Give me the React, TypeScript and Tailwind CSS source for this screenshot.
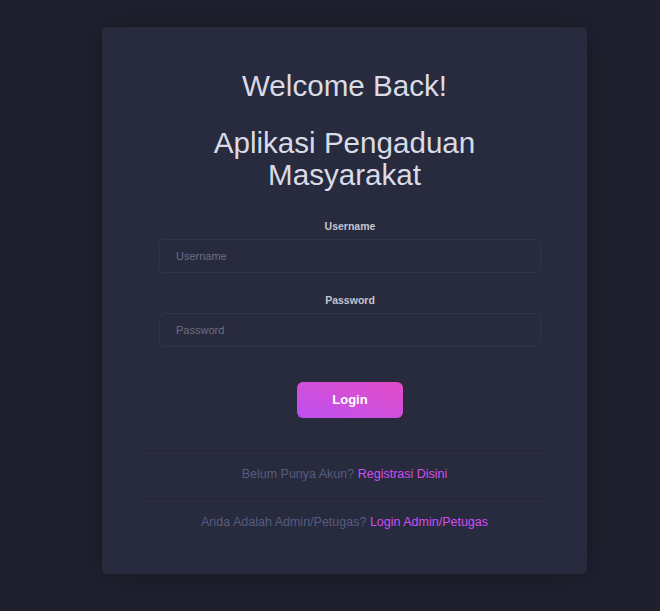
import React from "react";

export default function App() {
  return (
    <div
      className="min-h-[611px] w-full bg-[#1f1f2e] pt-[27px]"
      style={{ fontFamily: '"Liberation Sans", Arial, sans-serif' }}
    >
      <div className="ml-[102px] w-[485px] rounded-[5px] bg-[#282a3e] px-[43px] pt-[41px] pb-[44px] shadow-[0_0_30px_rgba(0,0,0,0.25)]">
        <h1 className="text-center text-[29.6px] leading-[36px] font-normal text-[#d9dbe6]">
          Welcome Back!
        </h1>
        <h2 className="mt-[23px] text-center text-[29.6px] leading-[32px] font-normal text-[#d9dbe6]">
          Aplikasi Pengaduan
          <br />
          Masyarakat
        </h2>

        <div className="ml-[14px] w-[382px]">
          <label className="mt-[28px] block text-center text-[10.5px] leading-[14px] font-bold text-[#c4c5d0]">
            Username
          </label>
          <input
            type="text"
            placeholder="Username"
            className="mt-[6px] block h-[34px] w-full rounded-[6px] border border-[#30344f] bg-[#282a3e] pl-[16px] text-[11px] text-[#c4c5d0] outline-none placeholder:text-[#6c6f82]"
          />
          <label className="mt-[20px] block text-center text-[10.5px] leading-[14px] font-bold text-[#c4c5d0]">
            Password
          </label>
          <input
            type="password"
            placeholder="Password"
            className="mt-[6px] block h-[34px] w-full rounded-[6px] border border-[#30344f] bg-[#282a3e] pl-[16px] text-[11px] text-[#c4c5d0] outline-none placeholder:text-[#6c6f82]"
          />
          <div className="mt-[35px] flex justify-center">
            <button className="h-[36px] w-[106px] rounded-[6px] bg-gradient-to-tr from-[#bd4ff0] to-[#e34bc6] text-[13px] font-bold text-white">
              Login
            </button>
          </div>
        </div>

        <div className="mt-[32px] border-t border-[#222436] py-[16px] text-center text-[12.5px] leading-[15px] text-[#555d7f]">
          Belum Punya Akun?{" "}
          <a className="text-[#d14ef2]">Registrasi Disini</a>
        </div>
        <div className="border-t border-[#222436] pt-[16px] text-center text-[12.5px] leading-[15px] text-[#555d7f]">
          Anda Adalah Admin/Petugas?{" "}
          <a className="text-[#d14ef2]">Login Admin/Petugas</a>
        </div>
      </div>
    </div>
  );
}
